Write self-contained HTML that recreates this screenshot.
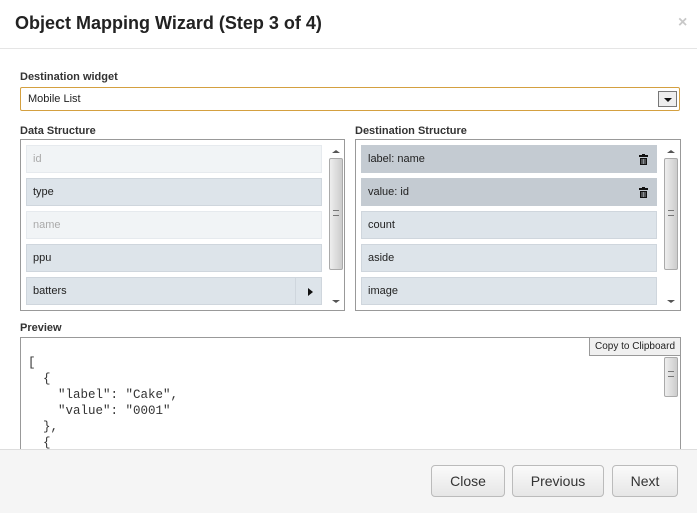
<!DOCTYPE html>
<html><head><style>
*{box-sizing:border-box;margin:0;padding:0}
body{width:697px;height:513px;background:#fff;font-family:"Liberation Sans",Arial,sans-serif;position:relative;overflow:hidden;color:#222}
.a{position:absolute}
.lbl{font-size:11px;font-weight:bold;color:#333}
.box{border:1px solid #999;background:#fff}
.it{position:absolute;height:28px;border:1px solid #cfd6dd;background:#dde4ea;font-size:11px;line-height:26px;padding-left:6px;color:#222}
.it.dis{background:#f1f4f6;border-color:#e6eaee;color:#aaa}
.it.sel{background:#c4cbd2;border-color:#c4cbd2}
.sb{position:absolute;width:16px;background:#fff}
.thumb{position:absolute;left:1px;width:14px;border:1px solid #aaa;border-radius:2px;background:linear-gradient(to right,#eee,#ddd,#ccc)}
.btn{position:absolute;top:465px;height:32px;border:1px solid #bbb;border-radius:4px;background:linear-gradient(#fafafa,#e6e6e6);font-size:14px;color:#333;text-align:center;line-height:30px}
pre{font-family:"Liberation Mono",monospace;font-size:12.5px;line-height:16px;color:#333}
.tr{position:absolute;left:277px;top:8px}
</style></head><body>
<div class="a" style="left:15px;top:13px;font-size:18px;font-weight:bold;color:#222">Object Mapping Wizard (Step 3 of 4)</div>
<div class="a" style="left:678px;top:14px;font-size:16px;font-weight:bold;color:#c8c8c8">×</div>
<div class="a" style="left:0;top:48px;width:697px;height:1px;background:#e5e5e5"></div>

<div class="a lbl" style="left:20px;top:71px">Destination widget</div>
<div class="a" style="left:20px;top:87px;width:660px;height:24px;border:1px solid #d4a040;border-radius:2px;font-size:11px;line-height:22px;padding-left:7px">Mobile List</div>
<div class="a" style="left:658px;top:91px;width:19px;height:16px;border:1px solid #777;background:#eee"></div>
<div class="a" style="left:664px;top:98px;width:0;height:0;border-left:4px solid transparent;border-right:4px solid transparent;border-top:4px solid #111"></div>

<div class="a lbl" style="left:20px;top:125px">Data Structure</div>
<div class="a box" style="left:20px;top:139px;width:325px;height:172px"></div>
<div class="it dis" style="left:26px;top:145px;width:296px">id</div>
<div class="it" style="left:26px;top:178px;width:296px">type</div>
<div class="it dis" style="left:26px;top:211px;width:296px">name</div>
<div class="it" style="left:26px;top:244px;width:296px">ppu</div>
<div class="it" style="left:26px;top:277px;width:296px">batters<span style="position:absolute;left:268px;top:0;width:27px;height:26px;border-left:1px solid #cfd6dd"></span><span style="position:absolute;left:281px;top:10px;border-top:4px solid transparent;border-bottom:4px solid transparent;border-left:5px solid #111"></span></div>
<div class="sb" style="left:328px;top:140px;height:170px"><div class="thumb" style="top:18px;height:112px"></div><div class="a" style="left:4px;top:10px;border-left:4px solid transparent;border-right:4px solid transparent;border-bottom:3px solid #555"></div><div class="a" style="left:4px;top:160px;border-left:4px solid transparent;border-right:4px solid transparent;border-top:3px solid #555"></div><div class="a" style="left:5px;top:70px;width:6px;height:6px;border-top:1px solid #777;border-bottom:1px solid #777"></div></div>

<div class="a lbl" style="left:355px;top:125px">Destination Structure</div>
<div class="a box" style="left:355px;top:139px;width:326px;height:172px"></div>
<div class="it sel" style="left:361px;top:145px;width:296px">label: name<svg class="tr" width="9" height="11" viewBox="0 0 9 11"><rect x="0" y="1" width="9" height="2" fill="#111"/><rect x="3" y="0" width="3" height="1" fill="#111"/><path d="M1 4h7v7h-7z" fill="#111"/><path d="M3 5v5M4.5 5v5M6 5v5" stroke="#c4cbd2" stroke-width=".7"/></svg></div>
<div class="it sel" style="left:361px;top:178px;width:296px">value: id<svg class="tr" width="9" height="11" viewBox="0 0 9 11"><rect x="0" y="1" width="9" height="2" fill="#111"/><rect x="3" y="0" width="3" height="1" fill="#111"/><path d="M1 4h7v7h-7z" fill="#111"/><path d="M3 5v5M4.5 5v5M6 5v5" stroke="#c4cbd2" stroke-width=".7"/></svg></div>
<div class="it" style="left:361px;top:211px;width:296px">count</div>
<div class="it" style="left:361px;top:244px;width:296px">aside</div>
<div class="it" style="left:361px;top:277px;width:296px">image</div>
<div class="sb" style="left:663px;top:140px;height:170px"><div class="thumb" style="top:18px;height:112px"></div><div class="a" style="left:4px;top:10px;border-left:4px solid transparent;border-right:4px solid transparent;border-bottom:3px solid #555"></div><div class="a" style="left:4px;top:160px;border-left:4px solid transparent;border-right:4px solid transparent;border-top:3px solid #555"></div><div class="a" style="left:5px;top:70px;width:6px;height:6px;border-top:1px solid #777;border-bottom:1px solid #777"></div></div>

<div class="a lbl" style="left:20px;top:322px">Preview</div>
<div class="a box" style="left:20px;top:337px;width:661px;height:130px"></div>
<pre class="a" style="left:28px;top:355px">[
  {
    "label": "Cake",
    "value": "0001"
  },
  {</pre>
<div class="a" style="left:589px;top:337px;width:92px;height:19px;border:1px solid #999;background:#f0f0f0;font-size:10px;line-height:17px;text-align:center">Copy to Clipboard</div>
<div class="sb" style="left:663px;top:357px;height:100px"><div class="thumb" style="top:0;height:40px"></div><div class="a" style="left:5px;top:14px;width:6px;height:6px;border-top:1px solid #777;border-bottom:1px solid #777"></div></div>

<div class="a" style="left:0;top:449px;width:697px;height:64px;background:#f5f5f5;border-top:1px solid #ddd"></div>
<div class="btn" style="left:431px;width:74px">Close</div>
<div class="btn" style="left:512px;width:92px">Previous</div>
<div class="btn" style="left:612px;width:66px">Next</div>
</body></html>
